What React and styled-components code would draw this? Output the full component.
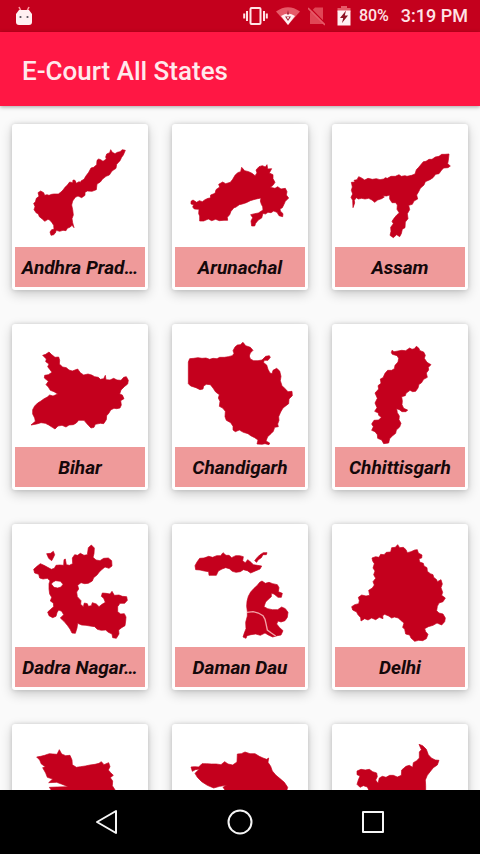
import React from "react";
import styled, { createGlobalStyle } from "styled-components";

const GlobalStyle = createGlobalStyle`
  *, *::before, *::after { box-sizing: border-box; }
  body { margin: 0; background: #fafafa; font-family: Roboto, sans-serif; }
`;

const Screen = styled.div`
  display: flex;
  flex-direction: column;
  height: 100vh;
  background: #fafafa;
`;

const StatusBar = styled.div`
  flex: none;
  display: flex;
  align-items: center;
  height: 32px;
  padding: 0 12px 0 16px;
  background: #c4001d;
  color: #ffe3e6;
`;

const StatusGroup = styled.div`
  display: flex;
  align-items: center;
  gap: 8px;
  margin-left: auto;
`;

const StatusIcon = styled.svg`
  display: block;
  flex: none;
`;

const Battery = styled.span`
  display: flex;
  align-items: center;
  gap: 8px;
  margin-left: 4px;
  font-size: 16px;
  font-weight: 500;
  line-height: 34px;
`;

const Clock = styled.time`
  margin-left: 4px;
  font-size: 18px;
  font-weight: 500;
  line-height: 34px;
`;

const AppBar = styled.header`
  position: relative;
  flex: none;
  display: flex;
  align-items: center;
  height: 74px;
  padding: 4px 22px 0;
  background: #ff1744;
  box-shadow: 0 1px 4px rgba(0, 0, 0, 0.35);
`;

const Title = styled.h1`
  margin: 0;
  color: #ffe9ec;
  font-size: 26px;
  font-weight: 500;
  line-height: 32px;
`;

const Content = styled.main`
  flex: 1;
  min-height: 0;
  overflow-y: auto;
  scrollbar-width: none;
`;

const StateGrid = styled.ul`
  display: grid;
  grid-template-columns: repeat(3, minmax(0, 1fr));
  gap: 34px 24px;
  margin: 0;
  padding: 18px 12px;
  list-style: none;
`;

const Card = styled.a`
  display: flex;
  flex-direction: column;
  padding: 3px;
  border-radius: 3px;
  background: #fff;
  box-shadow: 0 4px 12px rgba(0, 0, 0, 0.2), 0 0 4px rgba(0, 0, 0, 0.14);
  color: #14080a;
  text-decoration: none;
`;

const MapImage = styled.svg`
  display: block;
  width: 100%;
  height: 120px;
  fill: #c4001d;
  stroke: #c4001d;
  stroke-width: 2;
`;

const Label = styled.span`
  padding: 2px 4px 0;
  overflow: hidden;
  background: #ef9a9a;
  font-size: 19px;
  font-style: italic;
  font-weight: 700;
  line-height: 38px;
  text-align: center;
  text-overflow: ellipsis;
  white-space: nowrap;
`;

const NavBar = styled.nav`
  flex: none;
  display: grid;
  grid-template-columns: repeat(3, 1fr);
  height: 64px;
  padding: 0 40px;
  background: #000;
`;

const NavButton = styled.button`
  display: flex;
  align-items: center;
  justify-content: center;
  padding: 0;
  border: 0;
  background: none;
`;

const NavIcon = styled.svg`
  fill: none;
  stroke: #f5f5f5;
  stroke-width: 2;
  stroke-linejoin: round;
`;

const states = [
  {
    name: "Andhra Prad…",
    box: "30 36 390 360",
    d: "M361 106L352 104L345 110L337 112L330 116L322 112L317 104L314 113L305 117L302 126L304 132L294 139L287 134L281 132L276 136L275 149L266 157L258 159L251 172L242 184L237 193L229 197L226 202L222 200L214 205L210 196L204 195L203 203L194 201L187 210L180 217L174 225L168 231L160 237L147 237L140 238L132 241L126 239L119 241L116 233L107 228L99 233L102 244L94 250L91 261L86 265L90 275L87 284L94 294L100 297L103 305L111 311L119 319L129 313L134 315L141 323L146 331L147 343L140 344L135 351L138 361L146 359L151 354L154 346L164 349L174 346L183 347L187 340L196 336L201 331L207 338L203 323L201 311L205 300L203 284L200 270L203 258L211 247L219 243L230 248L240 241L240 232L247 228L261 229L274 224L276 207L286 201L292 193L303 184L313 180L321 168L333 160L335 148L345 137L350 127L355 120Z",
  },
  {
    name: "Arunachal",
    box: "30 36 390 360",
    d: "M78 259L84 255L95 262L103 257L112 260L120 254L129 250L136 249L137 240L150 235L153 224L164 216L161 208L173 201L182 206L196 202L203 193L210 181L218 173L227 170L230 157L239 167L251 170L261 175L270 182L276 174L273 165L282 155L292 152L301 156L306 149L308 162L320 161L313 174L324 179L324 191L330 202L324 211L316 217L330 220L338 215L348 222L361 220L366 230L364 240L371 249L361 259L357 268L352 278L345 282L346 288L354 296L353 305L342 302L336 292L326 288L318 293L309 292L301 297L294 295L290 309L280 315L272 325L269 333L260 333L258 318L263 308L257 299L269 296L280 294L294 285L293 275L289 268L286 258L288 249L278 251L266 254L256 257L244 263L232 267L223 269L212 277L207 278L198 289L194 299L187 307L188 316L177 316L163 317L152 313L140 317L130 312L116 318L104 318L104 303L101 296L102 283L88 282L83 276L86 269L78 267Z",
  },
  {
    name: "Assam",
    box: "30 36 390 360",
    d: "M372 117L360 118L350 118L342 124L331 126L321 133L312 133L303 139L295 140L286 151L281 157L274 164L270 177L260 181L246 184L240 182L229 184L222 179L211 184L198 184L187 190L181 188L176 192L165 194L154 191L142 193L129 190L119 195L108 188L101 185L96 194L87 196L90 201L79 202L82 216L79 226L83 237L78 247L83 256L84 278L89 264L88 256L94 248L100 252L110 250L120 252L131 250L141 255L149 262L158 255L170 251L178 246L173 242L185 243L194 240L194 252L201 263L212 263L217 270L216 283L223 294L216 299L207 310L201 319L205 326L197 337L198 349L195 361L205 368L215 359L224 365L229 356L232 343L240 338L241 321L249 311L247 296L254 284L251 271L262 268L267 258L278 252L275 240L281 230L286 220L297 210L301 200L315 194L324 188L332 178L342 176L350 165L356 159L369 158L376 153L368 146L370 136Z",
  },
  {
    name: "Bihar",
    box: "30 36 390 360",
    d: "M113 121L122 118L132 111L139 118L150 127L161 126L164 136L163 147L173 156L184 158L192 165L202 168L218 162L226 173L236 180L249 177L260 180L269 185L280 187L286 193L296 191L301 181L303 194L315 195L326 190L336 195L348 196L356 187L364 185L370 196L368 207L358 215L348 225L344 237L352 240L357 251L347 257L349 270L345 279L335 281L327 280L317 285L312 294L305 302L304 314L296 326L286 325L271 328L267 337L258 339L250 331L244 324L237 316L221 316L214 324L205 329L192 330L183 336L171 331L159 333L150 342L142 337L131 330L121 325L108 323L95 327L78 330L91 319L89 309L83 297L83 284L89 273L98 264L108 258L116 252L127 246L134 240L144 243L158 237L147 230L136 226L130 216L123 209L130 199L118 189L119 181L130 179L141 172L134 163L128 155L132 147L122 140L124 132Z",
  },
  {
    name: "Chandigarh",
    box: "30 36 390 360",
    d: "M70 141L74 131L86 130L99 128L111 130L123 129L134 133L144 130L156 131L164 127L178 127L190 125L202 122L207 115L204 107L210 96L217 90L226 89L234 82L242 92L256 97L264 106L256 114L253 123L256 132L266 137L279 137L291 135L302 124L313 122L316 127L309 136L297 136L296 143L305 150L309 163L315 174L321 176L324 166L335 160L344 168L348 184L346 197L351 212L359 220L369 230L381 229L382 242L372 252L371 266L363 272L354 279L347 291L341 305L342 316L338 327L340 335L329 337L325 349L318 356L308 365L303 378L314 384L312 389L300 386L291 388L276 387L279 375L269 368L257 362L249 356L235 352L223 345L211 350L204 345L204 334L197 323L184 316L180 305L181 289L173 279L163 274L165 259L160 249L163 239L152 231L144 219L136 209L124 208L116 213L114 222L105 224L93 218L77 213L70 206Z",
  },
  {
    name: "Chhittisgarh",
    box: "30 36 390 360",
    d: "M201 106L207 110L219 108L230 106L242 107L254 99L261 103L268 101L274 94L281 99L285 107L296 111L301 121L298 130L306 142L318 149L310 157L311 165L304 174L307 187L296 193L289 204L282 208L279 219L272 229L263 230L255 226L243 235L241 242L230 245L232 258L231 269L236 280L248 285L243 290L231 290L223 284L215 281L217 293L223 303L222 314L228 325L224 336L214 345L212 355L202 363L194 371L191 384L176 386L170 375L158 370L157 359L150 350L140 346L145 335L140 327L147 316L161 315L169 307L161 301L160 294L149 289L156 278L150 264L157 250L150 234L161 222L159 212L168 205L166 192L174 188L180 175L188 166L200 166L208 161L210 151L219 141L221 130L216 122L202 118L199 113Z",
  },
  {
    name: "Dadra Nagar…",
    box: "30 36 390 360",
    d: "M125 116L137 115L145 109L149 119L145 128L140 137L131 130ZM86 163L96 154L106 146L117 151L128 157L139 163L148 160L153 151L164 150L176 151L177 134L181 132L184 149L193 151L203 146L202 129L209 119L218 121L226 115L237 121L247 119L250 98L259 90L268 99L267 116L264 127L273 135L285 137L296 130L310 129L320 137L321 153L312 160L300 156L290 164L283 171L276 180L266 188L262 198L250 205L239 206L228 203L218 211L221 222L215 231L217 245L228 257L227 268L235 275L238 264L247 266L250 274L259 272L262 263L274 267L282 275L291 268L301 262L296 250L289 244L292 234L303 235L315 237L321 229L328 241L342 240L352 244L365 245L367 256L359 265L345 265L338 275L338 290L347 297L358 296L363 306L362 318L360 332L350 338L341 345L342 357L334 370L323 368L321 357L310 352L302 345L289 346L277 343L269 335L255 333L243 331L230 330L218 325L216 339L211 355L201 354L195 342L187 331L177 319L166 309L176 299L170 289L161 285L156 293L153 304L143 308L132 302L128 291L137 283L146 275L145 264L136 258L140 247L134 237L132 222L132 206L135 197L127 190L114 192L104 189L101 178L89 174ZM139 207L147 217L158 219L168 216L174 208L166 199L152 197L144 201Z",
  },
  {
    name: "Daman Dau",
    box: "30 36 390 360",
    d: "M90 152L96 141L104 130L117 129L131 124L143 127L155 122L167 122L174 113L183 121L192 121L200 128L212 122L224 122L235 125L233 138L241 143L248 134L258 142L265 149L277 151L290 153L285 162L273 167L257 174L247 167L235 164L226 170L213 172L202 169L193 161L182 158L171 162L160 168L154 181L132 181L131 170L118 168L105 165L92 164ZM269 137L276 128L284 120L295 113L306 113L304 119L294 119L289 128L279 135L275 142ZM247 289L245 274L246 259L250 244L257 231L267 220L277 211L284 202L291 198L301 205L312 202L323 206L337 209L342 218L340 230L352 235L349 247L339 247L327 237L319 235L319 245L311 252L302 261L297 275L308 281L322 284L338 284L350 276L361 281L369 292L367 307L360 317L348 321L339 318L335 327L344 338L354 347L348 360L337 362L323 366L310 360L300 354L286 361L272 357L258 359L246 362L243 370L234 366L238 354L243 341L242 322L247 303Z",
    border: "M246 292L264 290L280 294L294 302L300 313L303 326L307 345L319 354L332 363",
  },
  {
    name: "Delhi",
    box: "30 36 390 360",
    d: "M141 129L152 125L162 127L167 118L177 119L184 112L197 111L200 98L211 97L218 89L224 98L235 97L243 104L247 113L258 110L269 105L277 104L280 114L291 120L290 129L282 131L284 141L295 145L297 153L306 158L307 169L316 176L324 179L326 187L335 194L337 200L348 194L352 207L348 218L353 232L350 241L361 249L354 260L342 264L337 274L335 287L342 294L354 297L361 309L359 320L350 330L336 324L324 331L310 335L299 341L302 350L309 358L304 371L293 377L281 376L269 379L258 369L254 360L242 357L239 343L233 337L237 324L226 315L220 309L208 306L200 309L191 303L179 298L173 302L174 311L163 307L152 314L140 309L129 315L119 311L108 318L107 308L98 298L95 291L83 285L80 275L89 269L101 266L103 257L100 247L110 240L123 243L134 241L131 226L142 219L148 210L144 200L152 190L146 179L150 168L144 159L148 146L143 138Z",
  },
  {
    name: "Goa",
    box: "45 39 390 360",
    d: "M110 129L122 127L134 124L148 119L159 120L171 121L178 107L185 120L197 125L210 124L216 138L217 152L229 160L242 158L256 156L270 153L285 151L297 148L304 143L312 152L326 146L330 158L325 168L332 176L340 184L331 191L338 201L337 215L346 229L350 250L336 268L340 290L322 312L300 322L286 340L262 332L240 318L220 300L204 282L184 264L166 246L148 220L172 219L205 218L184 210L170 205L146 206L158 195L142 190L137 177L128 161L136 158L124 150L119 138Z",
  },
  {
    name: "Gujarat",
    box: "525 39 390 360",
    d: "M573 159L584 158L596 159L606 149L620 149L634 150L649 150L663 152L674 143L684 150L698 153L711 144L712 120L724 119L735 114L750 119L765 119L778 127L789 132L800 136L806 132L804 145L812 157L817 171L828 184L839 193L853 205L863 220L858 238L842 252L826 270L818 300L796 320L776 336L758 318L750 290L738 268L722 290L694 306L664 292L640 268L622 245L648 238L675 228L669 220L680 214L659 217L641 222L622 214L605 203L592 190L585 178L598 165L586 167L577 172Z",
  },
  {
    name: "Haryana",
    box: "1005 39 390 360",
    d: "M1071 171L1083 166L1096 168L1108 166L1118 173L1130 177L1132 188L1127 198L1134 208L1138 192L1147 187L1158 190L1169 184L1180 184L1192 189L1204 184L1205 168L1218 157L1228 154L1238 160L1240 146L1250 140L1258 132L1258 114L1264 107L1257 91L1268 95L1279 106L1285 122L1294 132L1306 138L1317 139L1312 153L1300 161L1292 171L1282 184L1276 198L1277 214L1277 230L1284 252L1290 280L1276 306L1254 328L1230 316L1210 322L1190 300L1170 290L1150 270L1130 250L1110 236L1102 219L1090 215L1080 220L1071 211L1075 198L1080 186L1071 182Z",
  },
];

function StateCard({ state }) {
  return (
    <li>
      <Card href="#state">
        <MapImage viewBox={state.box} aria-hidden="true">
          <path d={state.d} fillRule="evenodd" />
          {state.border && (
            <path d={state.border} fill="none" stroke="#f3a3a8" strokeWidth="4" />
          )}
        </MapImage>
        <Label>{state.name}</Label>
      </Card>
    </li>
  );
}

function RobotIcon() {
  return (
    <StatusIcon width="16" height="20" viewBox="0 0 16 20" fill="#fff0f1" aria-hidden="true">
      <path d="M3 1L5 5M13 1L11 5" stroke="#ff9aa2" strokeWidth="1.6" />
      <path d="M3 4H13L16 8V16Q16 19 13 19H3Q0 19 0 16V8Z" />
      <circle cx="4.5" cy="11" r="1.1" fill="#56505a" />
      <circle cx="11.5" cy="11" r="1.1" fill="#56505a" />
    </StatusIcon>
  );
}

function VibrateIcon() {
  return (
    <StatusIcon width="25" height="20" viewBox="0 0 25 20" fill="none" stroke="currentColor" strokeWidth="2" aria-hidden="true">
      <rect x="7.5" y="2" width="10" height="16" rx="1" />
      <path d="M4 5V15M21 5V15M1.2 7.5V12.5M23.8 7.5V12.5" />
    </StatusIcon>
  );
}

function WifiIcon() {
  return (
    <StatusIcon width="24" height="20" viewBox="0 0 24 20" aria-hidden="true">
      <path d="M0 5.5Q12-3 24 5.5L12 19Z" fill="#e65a68" />
      <path d="M5 10Q12 5 19 10L12 19Z" fill="#fff0f1" />
      <path d="M12 4L13.2 8.5H10.8ZM9 10.5H15L12 15Z" fill="#a5283a" />
      <circle cx="12" cy="11.8" r="1" fill="#fff0f1" />
    </StatusIcon>
  );
}

function NoSimIcon() {
  return (
    <StatusIcon width="17" height="20" viewBox="0 0 17 20" aria-hidden="true">
      <path d="M7 1.5H15V18H2V6.5Z" fill="#e04656" />
      <path d="M1 1L18 18.5" stroke="#c4001d" strokeWidth="1.6" />
      <path d="M0 2L17 19" stroke="#e65a68" strokeWidth="1.6" />
    </StatusIcon>
  );
}

function BatteryIcon() {
  return (
    <StatusIcon width="14" height="20" viewBox="0 0 14 20" aria-hidden="true">
      <path d="M4 0H10V2H13.5V6H.5V2H4Z" fill="#e65a68" />
      <path d="M.5 4.5H13.5V19.5H.5Z" fill="#fff0f1" />
      <path d="M9 4.5L3 12H6.2L5 17L11 9.5H7.8Z" fill="#8c1022" />
    </StatusIcon>
  );
}

export default function App() {
  return (
    <Screen>
      <GlobalStyle />
      <StatusBar>
        <RobotIcon />
        <StatusGroup>
          <VibrateIcon />
          <WifiIcon />
          <NoSimIcon />
          <Battery>
            <BatteryIcon />
            80%
          </Battery>
          <Clock>3:19 PM</Clock>
        </StatusGroup>
      </StatusBar>
      <AppBar>
        <Title>E-Court All States</Title>
      </AppBar>
      <Content>
        <StateGrid>
          {states.map((state) => (
            <StateCard key={state.name} state={state} />
          ))}
        </StateGrid>
      </Content>
      <NavBar aria-label="System">
        <NavButton type="button" aria-label="Back">
          <NavIcon width="26" height="26" viewBox="0 0 26 26">
            <path d="M22 2V24L3 13Z" />
          </NavIcon>
        </NavButton>
        <NavButton type="button" aria-label="Home">
          <NavIcon width="26" height="26" viewBox="0 0 26 26">
            <circle cx="13" cy="13" r="11.5" />
          </NavIcon>
        </NavButton>
        <NavButton type="button" aria-label="Recent apps">
          <NavIcon width="26" height="26" viewBox="0 0 26 26">
            <rect x="3" y="3" width="20" height="20" />
          </NavIcon>
        </NavButton>
      </NavBar>
    </Screen>
  );
}
